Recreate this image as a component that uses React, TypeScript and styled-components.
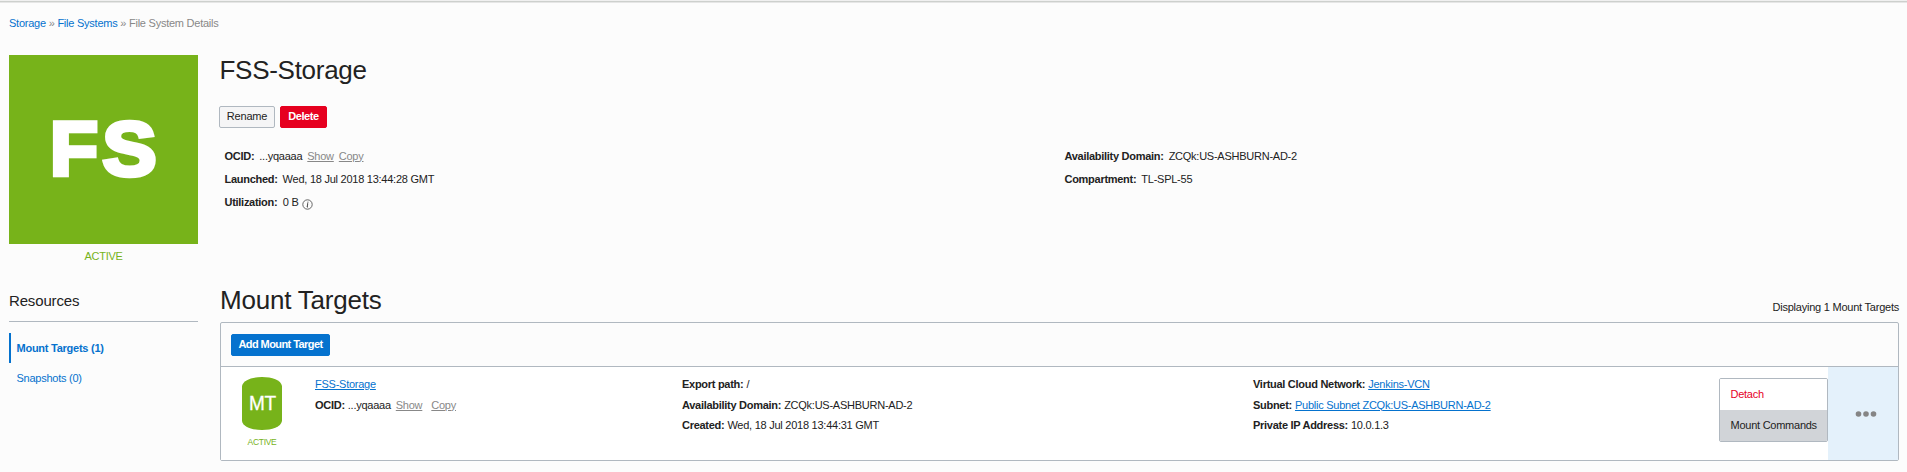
import React from 'react';
import styled, { createGlobalStyle } from 'styled-components';

const blue = '#0572ce';
const green = '#77b31a';
const border = '#b0b8c0';
const ink = '#222222';
const grey = '#888888';

const GlobalStyle = createGlobalStyle`
  * { box-sizing: border-box; }
  body {
    margin: 0;
    background: #fcfcfc;
    color: ${ink};
    font: 11px/16px "Liberation Sans", Arial, sans-serif;
    letter-spacing: -0.25px;
    overflow: hidden;
  }
`;

const Page = styled.div`
  height: 472px;
  border-top: 1px solid #f0f0f0;
`;

const TopRule = styled.div`
  height: 2px;
  background: #cdd0cd;
  border-bottom: 1px solid #e6e6e6;
`;

const Breadcrumb = styled.nav`
  height: 52px;
  padding: 12px 0 0 9px;
  color: ${grey};
  letter-spacing: -0.24px;
  white-space: pre;
`;

const Crumb = styled.a`
  color: ${blue};
`;

const Columns = styled.div`
  display: grid;
  grid-template-columns: 189px 1679px;
  column-gap: 22px;
  padding-left: 9px;
`;

const Sidebar = styled.aside`
  display: flex;
  flex-direction: column;
`;

const Tile = styled.svg`
  display: block;
  width: 189px;
  height: 189px;
  background: ${green};
`;

const Status = styled.div<{ $small?: boolean }>`
  color: ${green};
  text-align: center;
  font-size: ${(p) => (p.$small ? '8.5px' : '11px')};
  letter-spacing: ${(p) => (p.$small ? '-0.3px' : '-0.25px')};
  margin-top: 4px;
`;

const ResourcesTitle = styled.h3`
  margin: 27px 0 11px;
  padding-bottom: 10px;
  border-bottom: 1px solid ${border};
  font-size: 15px;
  line-height: 20px;
  font-weight: 400;
  letter-spacing: -0.15px;
`;

const NavItem = styled.a<{ $active?: boolean }>`
  display: flex;
  align-items: center;
  height: 30px;
  padding-left: 5.5px;
  border-left: 2px solid ${(p) => (p.$active ? blue : 'transparent')};
  color: ${blue};
  font-weight: ${(p) => (p.$active ? 700 : 400)};
`;

const Main = styled.main`
  display: flex;
  flex-direction: column;
`;

const Title = styled.h1`
  margin: 0 0 0 -0.5px;
  font-size: 26px;
  line-height: 30px;
  font-weight: 400;
  letter-spacing: -0.28px;
`;

const SectionTitle = styled(Title)`
  margin-left: 0;
  letter-spacing: -0.22px;
`;

const ButtonRow = styled.div`
  display: flex;
  gap: 5px;
  margin: 21px 0 0 -1px;
`;

const Button = styled.button<{ $kind: 'plain' | 'danger' | 'primary'; $width: number }>`
  width: ${(p) => p.$width}px;
  height: 22px;
  padding: 0 0 2px;
  border: 1px solid ${(p) => ({ plain: border, danger: '#e6001f', primary: blue })[p.$kind]};
  border-radius: 2px;
  background: ${(p) => ({ plain: '#f5f5f6', danger: '#e6001f', primary: blue })[p.$kind]};
  color: ${(p) => (p.$kind === 'plain' ? ink : '#ffffff')};
  font: ${(p) => (p.$kind === 'plain' ? 400 : 700)} 11px/18px "Liberation Sans", Arial, sans-serif;
  letter-spacing: ${(p) => ({ plain: '-0.2px', danger: '-0.42px', primary: '-0.57px' })[p.$kind]};
  white-space: nowrap;
`;

const Details = styled.div`
  display: grid;
  grid-template-columns: 840px 1fr;
  height: 157px;
  padding: 16px 0 0 4.5px;
`;

const DetailList = styled.div`
  display: flex;
  flex-direction: column;
`;

const Detail = styled.div<{ $height: number; $gap: number }>`
  display: flex;
  align-items: center;
  height: ${(p) => p.$height}px;
  column-gap: ${(p) => p.$gap}px;
  white-space: nowrap;
`;

const Label = styled.b`
  letter-spacing: -0.28px;
`;

const Link = styled.a<{ $muted?: boolean; $before?: number }>`
  color: ${(p) => (p.$muted ? grey : blue)};
  margin-left: ${(p) => p.$before ?? 0}px;
  text-decoration: underline;
  text-underline-offset: 1px;
`;

const InfoIcon = styled.svg`
  width: 11px;
  height: 11px;
  margin: 5px 0 0 -2px;
`;

const SectionHead = styled.div`
  display: flex;
  justify-content: space-between;
  height: 37px;
`;

const Count = styled.span`
  margin-top: 14px;
  letter-spacing: -0.23px;
`;

const Panel = styled.section`
  height: 139px;
  border: 1px solid ${border};
  border-radius: 2px;
`;

const Toolbar = styled.div`
  height: 44px;
  padding: 11px 0 0 10px;
  border-bottom: 1px solid ${border};
`;

const TargetRow = styled.div`
  display: grid;
  grid-template-columns: 94px 367px 571px 466px 109px 70px;
  height: 93px;
  background: #ffffff;
`;

const TargetIcon = styled.div`
  width: 40px;
  margin: 10px 0 0 21px;
`;

const Cylinder = styled.svg`
  display: block;
  width: 40px;
  height: 53px;
`;

const Cell = styled.div`
  padding-top: 6px;
`;

const Menu = styled.div`
  height: 64px;
  margin-top: 11px;
  border: 1px solid ${border};
  border-radius: 2px;
  overflow: hidden;
`;

const MenuItem = styled.div<{ $danger?: boolean; $hovered?: boolean }>`
  height: 31px;
  padding: 7px 0 0 10.5px;
  color: ${(p) => (p.$danger ? '#e6001f' : ink)};
  background: ${(p) => (p.$hovered ? '#d1d4d8' : '#ffffff')};
  white-space: nowrap;
`;

const MoreCell = styled.div`
  display: flex;
  align-items: center;
  justify-content: center;
  padding-left: 5px;
  background: #e4f1fb;
`;

const Dots = styled.svg`
  width: 22px;
  height: 8px;
`;

const heading = '"Liberation Sans", Arial, sans-serif';

export default function App() {
  return (
    <>
      <GlobalStyle />
      <Page>
        <TopRule />
        <Breadcrumb>
          <Crumb>Storage</Crumb> » <Crumb>File Systems</Crumb> » File System Details
        </Breadcrumb>
        <Columns>
          <Sidebar>
            <Tile viewBox="0 0 189 189">
              <g fill="#fff" stroke="#fff" strokeWidth="4.5" fontFamily={heading} fontWeight="700" fontSize="76" letterSpacing="0">
                <text x="41" y="119.500" textLength="48" lengthAdjust="spacingAndGlyphs">F</text>
                <text x="93.500" y="119.500" textLength="54" lengthAdjust="spacingAndGlyphs">S</text>
              </g>
            </Tile>
            <Status>ACTIVE</Status>
            <ResourcesTitle>Resources</ResourcesTitle>
            <NavItem $active>Mount Targets (1)</NavItem>
            <NavItem>Snapshots (0)</NavItem>
          </Sidebar>
          <Main>
            <Title>FSS-Storage</Title>
            <ButtonRow>
              <Button $kind="plain" $width={56}>Rename</Button>
              <Button $kind="danger" $width={47}>Delete</Button>
            </ButtonRow>
            <Details>
              <DetailList>
                <Detail $height={23} $gap={5}>
                  <Label>OCID:</Label>
                  <span>...yqaaaa</span>
                  <Link $muted>Show</Link>
                  <Link $muted>Copy</Link>
                </Detail>
                <Detail $height={23} $gap={5}>
                  <Label>Launched:</Label>
                  <span>Wed, 18 Jul 2018 13:44:28 GMT</span>
                </Detail>
                <Detail $height={23} $gap={5.5}>
                  <Label>Utilization:</Label>
                  <span>0 B</span>
                  <InfoIcon viewBox="0 0 11 11">
                    <circle cx="5.500" cy="5.500" r="4.700" fill="none" stroke="#555" strokeWidth="0.900" />
                    <path d="M5.9 2.700v1M5 4.700h.8l-.7 3.300h.9" fill="none" stroke="#333" strokeWidth="0.900" />
                  </InfoIcon>
                </Detail>
              </DetailList>
              <DetailList>
                <Detail $height={23} $gap={5}>
                  <Label>Availability Domain:</Label>
                  <span>ZCQk:US-ASHBURN-AD-2</span>
                </Detail>
                <Detail $height={23} $gap={5}>
                  <Label>Compartment:</Label>
                  <span>TL-SPL-55</span>
                </Detail>
              </DetailList>
            </Details>
            <SectionHead>
              <SectionTitle as="h2">Mount Targets</SectionTitle>
              <Count>Displaying 1 Mount Targets</Count>
            </SectionHead>
            <Panel>
              <Toolbar>
                <Button $kind="primary" $width={99}>Add Mount Target</Button>
              </Toolbar>
              <TargetRow>
                <TargetIcon>
                  <Cylinder viewBox="0 0 40 53">
                    <path d="M0 9C1 3 10 0 20 0s19 3 20 9v35c-1 6-10 9-20 9S1 50 0 44z" fill={green} />
                    <text x="7" y="33" textLength="27" lengthAdjust="spacingAndGlyphs" fontFamily={heading} fontSize="19.500" fill="#fff" stroke="#fff" strokeWidth="0.300">MT</text>
                  </Cylinder>
                  <Status $small>ACTIVE</Status>
                </TargetIcon>
                <Cell>
                  <Detail $height={21} $gap={3}>
                    <Link>FSS-Storage</Link>
                  </Detail>
                  <Detail $height={21} $gap={3}>
                    <Label>OCID:</Label>
                    <span>...yqaaaa</span>
                    <Link $muted $before={2}>Show</Link>
                    <Link $muted $before={6}>Copy</Link>
                  </Detail>
                </Cell>
                <Cell>
                  <Detail $height={21} $gap={3}>
                    <Label>Export path:</Label>
                    <span>/</span>
                  </Detail>
                  <Detail $height={21} $gap={3}>
                    <Label>Availability Domain:</Label>
                    <span>ZCQk:US-ASHBURN-AD-2</span>
                  </Detail>
                  <Detail $height={20} $gap={3}>
                    <Label>Created:</Label>
                    <span>Wed, 18 Jul 2018 13:44:31 GMT</span>
                  </Detail>
                </Cell>
                <Cell>
                  <Detail $height={21} $gap={3}>
                    <Label>Virtual Cloud Network:</Label>
                    <Link>Jenkins-VCN</Link>
                  </Detail>
                  <Detail $height={21} $gap={3}>
                    <Label>Subnet:</Label>
                    <Link>Public Subnet ZCQk:US-ASHBURN-AD-2</Link>
                  </Detail>
                  <Detail $height={20} $gap={3}>
                    <Label>Private IP Address:</Label>
                    <span>10.0.1.3</span>
                  </Detail>
                </Cell>
                <Menu>
                  <MenuItem $danger>Detach</MenuItem>
                  <MenuItem $hovered>Mount Commands</MenuItem>
                </Menu>
                <MoreCell>
                  <Dots viewBox="0 0 22 8" fill="#858585">
                    <circle cx="3.500" cy="4" r="2.800" />
                    <circle cx="11" cy="4" r="2.800" />
                    <circle cx="18.500" cy="4" r="2.800" />
                  </Dots>
                </MoreCell>
              </TargetRow>
            </Panel>
          </Main>
        </Columns>
      </Page>
    </>
  );
}
